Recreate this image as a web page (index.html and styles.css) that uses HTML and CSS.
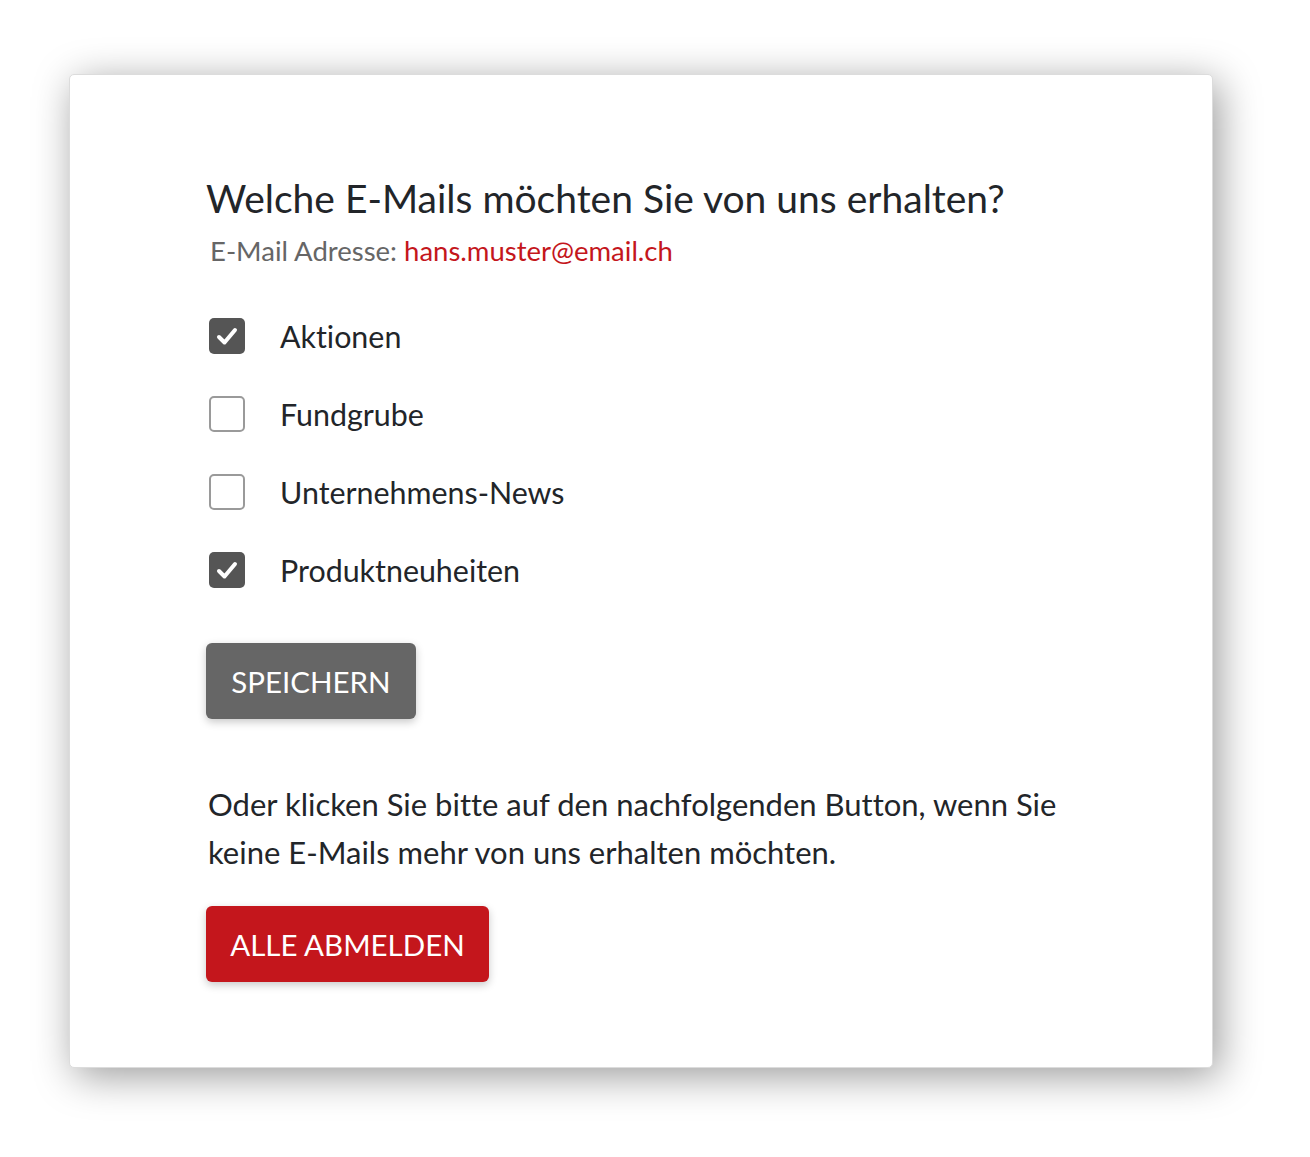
FILE: index.html
```html
<!DOCTYPE html>
<html lang="de">
<head>
<meta charset="utf-8">
<title>E-Mail Einstellungen</title>
<link rel="stylesheet" href="styles.css">
</head>
<body>
<main class="card">
  <h1 class="title">Welche E-Mails möchten Sie von uns erhalten?</h1>
  <p class="address">E-Mail Adresse: <span class="address-value">hans.muster@email.ch</span></p>
  <ul class="options">
    <li class="option">
      <span class="box checked"><svg viewBox="0 0 36 36" width="36" height="36"><path d="M10 19 L15.5 24.5 L26 12" fill="none" stroke="#fff" stroke-width="4" stroke-linecap="round" stroke-linejoin="round"/></svg></span>
      <span class="label">Aktionen</span>
    </li>
    <li class="option">
      <span class="box"></span>
      <span class="label">Fundgrube</span>
    </li>
    <li class="option">
      <span class="box"></span>
      <span class="label">Unternehmens-News</span>
    </li>
    <li class="option">
      <span class="box checked"><svg viewBox="0 0 36 36" width="36" height="36"><path d="M10 19 L15.5 24.5 L26 12" fill="none" stroke="#fff" stroke-width="4" stroke-linecap="round" stroke-linejoin="round"/></svg></span>
      <span class="label">Produktneuheiten</span>
    </li>
  </ul>
  <button class="btn btn-save" type="button">SPEICHERN</button>
  <p class="note">Oder klicken Sie bitte auf den nachfolgenden Button, wenn Sie<br>keine E-Mails mehr von uns erhalten möchten.</p>
  <button class="btn btn-unsub" type="button">ALLE ABMELDEN</button>
</main>
</body>
</html>
```

FILE: styles.css
```css
html, body {
  margin: 0;
  padding: 0;
  background: #ffffff;
}

body {
  box-sizing: border-box;
  min-height: 1157px;
  font-family: "Lato", "Open Sans", sans-serif;
  font-variant-ligatures: none;
  color: #222529;
  padding: 74px 0 0 69px;
}

.card {
  box-sizing: border-box;
  width: 1144px;
  height: 994px;
  background: #ffffff;
  border: 1px solid #dcdcdc;
  border-radius: 5px;
  box-shadow: 6px 8px 40px rgba(0, 0, 0, 0.4);
  padding: 100px 0 0 136px;
  display: flex;
  flex-direction: column;
  align-items: flex-start;
}

.title {
  margin: 0;
  font-size: 39px;
  font-weight: 400;
  line-height: 46px;
  color: #222529;
}

.address {
  margin: 13px 0 0 4px;
  font-size: 27.5px;
  line-height: 34px;
  color: #666666;
}

.address-value {
  color: #c4161c;
}

.options {
  list-style: none;
  margin: 50px 0 0 3px;
  padding: 0;
  display: flex;
  flex-direction: column;
  gap: 42px;
}

.option {
  display: flex;
  align-items: center;
  gap: 35px;
  height: 36px;
}

.box {
  box-sizing: border-box;
  width: 36px;
  height: 36px;
  border: 2px solid #9a9a9a;
  border-radius: 5px;
  background: #ffffff;
  display: flex;
}

.box.checked {
  border: none;
  background: #555555;
}

.label {
  font-size: 30.4px;
  color: #222529;
}

.btn {
  border: none;
  border-radius: 6px;
  color: #ffffff;
  font-family: inherit;
  font-variant-ligatures: none;
  font-size: 29.5px;
  height: 76px;
  padding: 0;
  white-space: nowrap;
  box-shadow: 0 3px 8px rgba(0, 0, 0, 0.22);
  cursor: pointer;
}

.btn-save {
  margin-top: 55px;
  background: #666666;
  width: 210px;
}

.btn-unsub {
  margin-top: 30px;
  background: #c4161c;
  width: 283px;
}

.note {
  margin: 61px 0 0 2px;
  font-size: 31px;
  line-height: 48px;
  color: #222529;
}
```
